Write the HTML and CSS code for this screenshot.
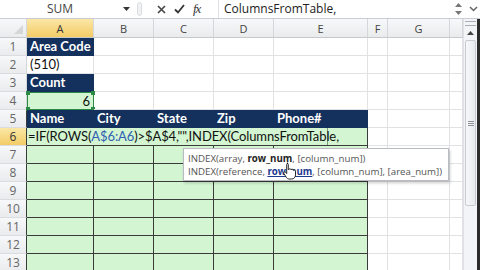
FILE: index.html
```html
<!DOCTYPE html>
<html lang="en">
<head>
    <meta charset="UTF-8">
    <title>Excel - INDEX formula</title>
    <link rel="stylesheet" href="styles.css">
</head>
<body>
    <div class="app">
        <!-- formula bar -->
        <div class="fbar">
            <div class="name-box">SUM</div>
            <div class="nb-drop"><svg width="7" height="4" viewBox="0 0 7 4"><path d="M0 0h7L3.5 4z" fill="#333"/></svg></div>
            <div class="grip"></div>
            <div class="fb-icons">
                <svg class="ico-x" width="9" height="9" viewBox="0 0 9 9"><path d="M1 1l7 7M8 1L1 8" stroke="#444" stroke-width="1.6"/></svg>
                <svg class="ico-ok" width="11" height="10" viewBox="0 0 11 10"><path d="M1 5.5l3 3L10 1" stroke="#333" stroke-width="1.8" fill="none"/></svg>
                <span class="fx">fx</span>
            </div>
            <div class="fb-input">ColumnsFromTable,</div>
            <div class="fb-ctrl">
                <svg width="9" height="14" viewBox="0 0 9 14"><path d="M1 5l3.5-4L8 5zM1 9l3.5 4L8 9z" fill="#777"/></svg>
                <svg width="9" height="6" viewBox="0 0 9 6"><path d="M1 1l3.5 3.5L8 1" stroke="#666" stroke-width="1.5" fill="none"/></svg>
            </div>
        </div>

        <div class="sheet">
            <div class="grid">
                <!-- column headers -->
                <div class="corner"><svg width="9" height="9" viewBox="0 0 9 9"><path d="M9 0v9H0z" fill="#d6d6d6"/></svg></div>
                <div class="hd sel">A</div><div class="hd">B</div><div class="hd">C</div><div class="hd">D</div><div class="hd">E</div><div class="hd">F</div><div class="hd">G</div><div class="hd"></div>

                <div class="rh">1</div><div class="c nv">Area Code</div><div class="c"></div><div class="c"></div><div class="c"></div><div class="c"></div><div class="c"></div><div class="c"></div><div class="c"></div>
                <div class="rh">2</div><div class="c">(510)</div><div class="c"></div><div class="c"></div><div class="c"></div><div class="c"></div><div class="c"></div><div class="c"></div><div class="c"></div>
                <div class="rh">3</div><div class="c nv">Count</div><div class="c"></div><div class="c"></div><div class="c"></div><div class="c"></div><div class="c"></div><div class="c"></div><div class="c"></div>
                <div class="rh">4</div>
                <div class="c gr num ref-green">6
                    <i class="hdl tl"></i><i class="hdl tr"></i><i class="hdl bl"></i><i class="hdl br"></i>
                </div>
                <div class="c"></div><div class="c"></div><div class="c"></div><div class="c"></div><div class="c"></div><div class="c"></div><div class="c"></div>

                <div class="rh edge">5</div><div class="c nv">Name</div><div class="c nv">City</div><div class="c nv">State</div><div class="c nv">Zip</div><div class="c nv">Phone#</div><div class="c"></div><div class="c"></div><div class="c"></div>

                <div class="rh edge sel">6</div>
                <div class="edit-row">
                    <div class="edit-box">=IF(ROWS(<span class="ref-blue">A$6:A6</span>)&gt;$A$4,"",INDEX(ColumnsFromTable,</div>
                </div>
                <div class="c"></div><div class="c"></div><div class="c"></div>

                <div class="rh edge">7</div><div class="t"></div><div class="t"></div><div class="t"></div><div class="t"></div><div class="t"></div><div class="c"></div><div class="c"></div><div class="c"></div>
                <div class="rh edge">8</div><div class="t"></div><div class="t"></div><div class="t"></div><div class="t"></div><div class="t"></div><div class="c"></div><div class="c"></div><div class="c"></div>
                <div class="rh edge">9</div><div class="t"></div><div class="t"></div><div class="t"></div><div class="t"></div><div class="t"></div><div class="c"></div><div class="c"></div><div class="c"></div>
                <div class="rh edge">10</div><div class="t"></div><div class="t"></div><div class="t"></div><div class="t"></div><div class="t"></div><div class="c"></div><div class="c"></div><div class="c"></div>
                <div class="rh edge">11</div><div class="t"></div><div class="t"></div><div class="t"></div><div class="t"></div><div class="t"></div><div class="c"></div><div class="c"></div><div class="c"></div>
                <div class="rh edge">12</div><div class="t"></div><div class="t"></div><div class="t"></div><div class="t"></div><div class="t"></div><div class="c"></div><div class="c"></div><div class="c"></div>
                <div class="rh edge">13</div><div class="t"></div><div class="t"></div><div class="t"></div><div class="t"></div><div class="t"></div><div class="c"></div><div class="c"></div><div class="c"></div>
            </div>

            <div class="vscroll">
                <div class="split"></div>
                <div class="vs-up"><svg width="7" height="4" viewBox="0 0 7 4"><path d="M0 4h7L3.5 0z" fill="#444"/></svg></div>
                <div class="thumb"><span></span><span></span><span></span></div>
            </div>
            <div class="win-edge"></div>
        </div>

        <!-- function tooltip -->
        <div class="tip">
            <div class="tip-line">INDEX(array, <b>row_num</b>, [column_num])</div>
            <div class="tip-line">INDEX(reference, <a>row_num</a>, [column_num], [area_num])</div>
        </div>
        <svg class="hand" width="13" height="18" viewBox="0 0 13 18">
            <path d="M4 1.2c.8 0 1.3.5 1.3 1.3v5.3l.2-.1c.2-.6.7-.9 1.3-.9.7 0 1.1.4 1.2 1 .3-.4.7-.6 1.2-.6.7 0 1.2.5 1.2 1.2.3-.2.6-.3.9-.3.7 0 1.2.5 1.2 1.3v3.4c0 2.4-1.5 4.2-3.9 4.2H6.2c-1.3 0-2.2-.6-2.9-1.7L.9 11.6c-.4-.6-.2-1.3.4-1.6.5-.3 1.1-.1 1.5.4l.9 1.2V2.5c0-.8.5-1.3 1.3-1.3z" fill="#fff" stroke="#111" stroke-width="0.9"/>
        </svg>
    </div>
</body>
</html>
```
FILE: styles.css
```css
* { box-sizing: border-box; }
body {
    margin: 0;
    width: 480px;
    height: 270px;
    overflow: hidden;
    background: #fff;
    font-family: Lato, "Open Sans", sans-serif;
}
.app {
    position: relative;
    width: 480px;
    height: 270px;
    overflow: hidden;
}

/* formula bar */
.fbar {
    display: flex;
    align-items: center;
    height: 19px;
    border-bottom: 1px solid #c9ccd2;
    background: #fff;
}
.name-box {
    width: 120px;
    height: 18px;
    text-align: center;
    font-family: "Open Sans", sans-serif;
    font-size: 12px;
    line-height: 18px;
    color: #444;
}
.nb-drop { width: 13px; display: flex; justify-content: center; }
.grip {
    width: 5px;
    height: 14px;
    margin: 0 6px 0 4px;
    border: 1px solid #d8dbe0;
    border-radius: 3px;
    background: #f1f2f4;
}
.fb-icons {
    display: flex;
    align-items: center;
    gap: 8px;
    padding-left: 9px;
    width: 70px;
    height: 18px;
}
.fx {
    font-family: "Liberation Serif", serif;
    font-style: italic;
    font-size: 13px;
    color: #333;
    letter-spacing: -1px;
}
.fb-input {
    flex: 1;
    height: 18px;
    padding-left: 5px;
    border-left: 1px solid #dde0e4;
    font-family: "Open Sans", sans-serif;
    font-size: 12px;
    line-height: 18px;
    color: #222;
}
.fb-ctrl {
    display: flex;
    align-items: center;
    gap: 6px;
    width: 30px;
    height: 18px;
    padding-left: 4px;
}

/* sheet */
.sheet {
    display: flex;
    height: 251px;
}
.grid {
    display: grid;
    grid-template-columns: 27px 67px 60px 60px 60px 94px 20px 62px 13px;
    grid-template-rows: 19px repeat(13, 18px);
    width: 463px;
    font-size: 13px;
}
.corner, .hd, .rh {
    background: linear-gradient(#f7f8f9, #eaebed);
    color: #444;
    border-right: 1px solid #d4d6da;
    border-bottom: 1px solid #c6c8cc;
    font-family: "Open Sans", sans-serif;
    font-size: 11px;
    display: flex;
    align-items: center;
    justify-content: center;
}
.corner { justify-content: flex-end; align-items: flex-end; padding: 0 3px 3px 0; }
.rh { border-bottom-color: #dadcdf; color: #666; font-size: 12px; }
.rh.edge { border-right-color: #3a3a3a; }
.hd.sel, .rh.sel {
    background: linear-gradient(#fbe7a6, #f3cc66);
    color: #333;
}
.c {
    position: relative;
    border-right: 1px solid #e1e2e4;
    border-bottom: 1px solid #e1e2e4;
    padding: 0 3px;
    line-height: 17px;
    color: #111;
    white-space: nowrap;
}
.nv {
    background: #14305c;
    color: #fff;
    font-weight: bold;
    border-color: #14305c;
}
.gr { background: #d3f5d2; }
.num { text-align: right; }
.ref-green { border: 1px solid #2d8a45; }
.hdl {
    position: absolute;
    width: 4px;
    height: 4px;
    background: #2d8a45;
}
.tl { left: -2px; top: -2px; }
.tr { right: -2px; top: -2px; }
.bl { left: -2px; bottom: -2px; }
.br { right: -2px; bottom: -2px; }

.t {
    background: #d3f5d2;
    border-right: 1px solid #3b3b3b;
    border-bottom: 1px solid #3b3b3b;
}
.edit-row {
    grid-column: span 5;
    background: #d3f5d2;
    border-right: 1px solid #3b3b3b;
    border-bottom: 1px solid #3b3b3b;
}
.edit-box {
    width: 301px;
    height: 17px;
    padding-left: 1px;
    border-right: 1px solid #7a9a7a;
    line-height: 17px;
    white-space: nowrap;
    color: #111;
    letter-spacing: -0.1px;
}
.ref-blue { color: #2f5fb3; }

/* scrollbar */
.vscroll {
    width: 14px;
    background: #f3f4f7;
    border-left: 1px solid #dfe1e6;
}
.split {
    height: 5px;
    margin: 2px 1px 0;
    border-top: 1px solid #a9adb5;
    border-bottom: 1px solid #a9adb5;
}
.vs-up {
    height: 14px;
    display: flex;
    align-items: center;
    justify-content: center;
}
.thumb {
    height: 166px;
    margin: 0 1px;
    border: 1px solid #c7cad1;
    border-radius: 2px;
    background: linear-gradient(90deg, #f8f8fa, #e7e9ee);
    display: flex;
    flex-direction: column;
    align-items: center;
    justify-content: center;
    gap: 1px;
}
.thumb span { width: 6px; height: 1px; background: #8e939c; }
.win-edge { width: 3px; background: #2b2b2b; }

/* tooltip */
.tip {
    position: absolute;
    left: 183px;
    top: 148px;
    width: 266px;
    height: 33px;
    padding: 3px 0 0 4px;
    background: #fff;
    border: 1px solid #b9bcc1;
    box-shadow: 1px 2px 3px rgba(0,0,0,0.2);
    font-family: "Open Sans", sans-serif;
    font-size: 9.7px;
    color: #555;
    white-space: nowrap;
}
.tip-line { height: 13px; line-height: 13px; }
.tip b { color: #222; }
.tip a { color: #1c3a8f; font-weight: bold; text-decoration: underline; }
.hand {
    position: absolute;
    left: 283px;
    top: 162px;
}
```
